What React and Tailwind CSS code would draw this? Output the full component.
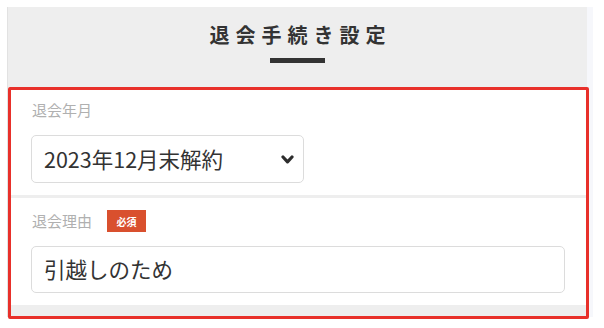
const font = { fontFamily: '"Noto Sans CJK JP", "Noto Sans", sans-serif' };

function Field({ label, required, children }) {
  return (
    <div className="bg-white pl-[23px] pr-[22px] pt-[12px] pb-[12px]">
      <div className="flex items-center gap-[15px] h-[22px] mb-[14px]">
        <span className="text-[15px] text-[#b0b0b0] pl-[1px]">{label}</span>
        {required && (
          <span className="bg-[#d9502e] text-white text-[10px] font-bold w-[39px] h-[22px] flex items-center justify-center">
            必須
          </span>
        )}
      </div>
      {children}
    </div>
  );
}

export default function App() {
  return (
    <div className="w-[604px] h-[328px] bg-white pt-[7px] pl-[7px]" style={font}>
      <div className="relative flex w-[586px]">
        <div className="w-[580px] bg-[#eeeeee] border-l border-[#e2e2e2] pb-[12px]">
          <div className="h-[80px] flex flex-col items-center pt-[14px]">
            <h1 className="text-[20px] font-bold text-[#333] tracking-[6px] pl-[6px] leading-[28px]">
              退会手続き設定
            </h1>
            <div className="w-[55px] h-[5px] bg-[#333] mt-[9px]" />
          </div>

          <div className="flex flex-col gap-[3px]">
            <Field label="退会年月">
              <div className="w-[273px] h-[48px] border border-[#dcdcdc] rounded-[5px] flex items-center justify-between pl-[12px] pr-[9px]">
                <span className="text-[21.5px] text-[#333]">2023年12月末解約</span>
                <svg width="13" height="10" viewBox="0 0 13 10" className="mt-[1px]">
                  <path
                    d="M2 2 L6.5 6.8 L11 2"
                    fill="none"
                    stroke="#2d2d2d"
                    strokeWidth="3.2"
                    strokeLinecap="round"
                    strokeLinejoin="round"
                  />
                </svg>
              </div>
            </Field>
            <Field label="退会理由" required>
              <div className="w-full h-[47px] border border-[#dcdcdc] rounded-[5px] flex items-center pl-[12px]">
                <span className="text-[21.5px] text-[#333]">引越しのため</span>
              </div>
            </Field>
          </div>
        </div>
        <div className="w-[6px] bg-[#f6f7fb]" />

        <div className="absolute left-[1px] top-[80px] w-[581px] h-[232px] border-[3px] border-[#e8302a] rounded-[2px] pointer-events-none" />
      </div>
    </div>
  );
}
